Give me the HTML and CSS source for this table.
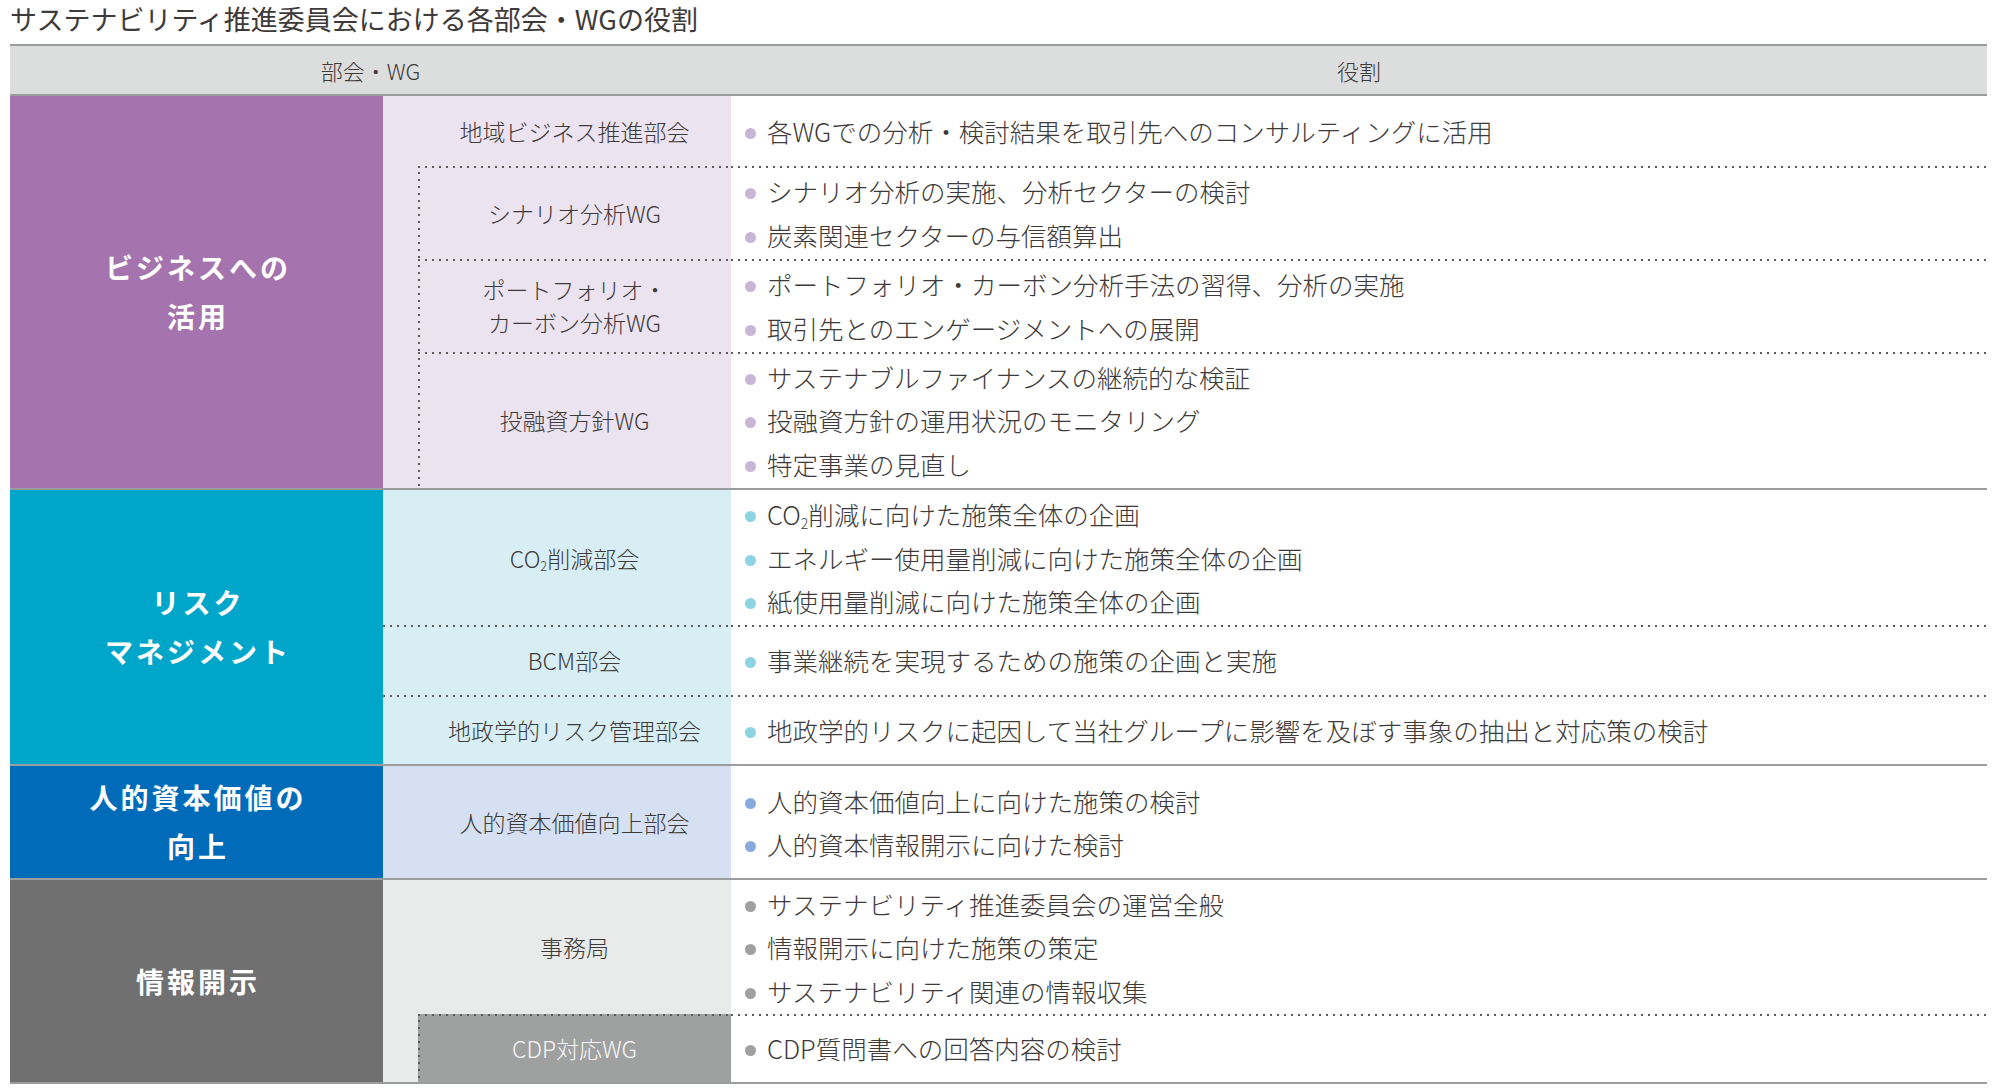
FILE: index.html
```html
<!DOCTYPE html>
<html lang="ja">

<head>
  <meta charset="UTF-8" />
  <meta name="viewport" content="width=device-width, initial-scale=1.0" />
  <title>サステナビリティ推進委員会における各部会・WGの役割</title>
  <link rel="stylesheet" href="styles.css">
</head>

<body>
  <h1 class="title">サステナビリティ推進委員会における各部会・WGの役割</h1>

  <div class="chart">
    <div class="head head-unit">部会・WG</div>
    <div class="head">役割</div>

    <!-- ビジネスへの活用 -->
    <div class="sec sec-biz rows-4">ビジネスへの<br>活用</div>
    <div class="unit wide biz"><span>地域ビジネス推進部会</span></div>
    <div class="role biz"><p>各WGでの分析・検討結果を取引先へのコンサルティングに活用</p></div>

    <div class="strip biz rows-3"></div>
    <div class="unit wg biz dot-top"><span>シナリオ分析WG</span></div>
    <div class="role biz dot-top">
      <p>シナリオ分析の実施、分析セクターの検討</p>
      <p>炭素関連セクターの与信額算出</p>
    </div>

    <div class="unit wg biz dot-top two-line"><span>ポートフォリオ・<br>カーボン分析WG</span></div>
    <div class="role biz dot-top">
      <p>ポートフォリオ・カーボン分析手法の習得、分析の実施</p>
      <p>取引先とのエンゲージメントへの展開</p>
    </div>

    <div class="unit wg biz dot-top"><span>投融資方針WG</span></div>
    <div class="role biz dot-top">
      <p>サステナブルファイナンスの継続的な検証</p>
      <p>投融資方針の運用状況のモニタリング</p>
      <p>特定事業の見直し</p>
    </div>

    <!-- リスクマネジメント -->
    <div class="sec sec-risk rows-3 first">リスク<br>マネジメント</div>
    <div class="unit wide risk first"><span>CO<sub>2</sub>削減部会</span></div>
    <div class="role risk first">
      <p>CO<sub>2</sub>削減に向けた施策全体の企画</p>
      <p>エネルギー使用量削減に向けた施策全体の企画</p>
      <p>紙使用量削減に向けた施策全体の企画</p>
    </div>

    <div class="unit wide risk dot-top"><span>BCM部会</span></div>
    <div class="role risk dot-top"><p>事業継続を実現するための施策の企画と実施</p></div>

    <div class="unit wide risk dot-top"><span>地政学的リスク管理部会</span></div>
    <div class="role risk dot-top"><p>地政学的リスクに起因して当社グループに影響を及ぼす事象の抽出と対応策の検討</p></div>

    <!-- 人的資本価値の向上 -->
    <div class="sec sec-hr first">人的資本価値の<br>向上</div>
    <div class="unit wide hr first"><span>人的資本価値向上部会</span></div>
    <div class="role hr first">
      <p>人的資本価値向上に向けた施策の検討</p>
      <p>人的資本情報開示に向けた検討</p>
    </div>

    <!-- 情報開示 -->
    <div class="sec sec-info rows-2 first last">情報開示</div>
    <div class="unit wide info first"><span>事務局</span></div>
    <div class="role info first">
      <p>サステナビリティ推進委員会の運営全般</p>
      <p>情報開示に向けた施策の策定</p>
      <p>サステナビリティ関連の情報収集</p>
    </div>

    <div class="strip info last"></div>
    <div class="unit wg cdp dot-top last"><span>CDP対応WG</span></div>
    <div class="role info dot-top last"><p>CDP質問書への回答内容の検討</p></div>
  </div>
</body>

</html>
```

FILE: styles.css
```css
body {
  margin: 0;
  color: #3e3a39;
  font-family: "Noto Sans CJK JP", "Noto Sans", sans-serif;
  font-weight: 300;
  background: #fff;
}

.title {
  margin: 0;
  padding-left: 10px;
  font-size: 27px;
  font-weight: 400;
  line-height: 38px;
  white-space: nowrap;
}

.chart {
  display: grid;
  grid-template-columns: 373px 35px 313px 1fr;
  grid-template-rows: 52px 70px 93px 93px 136px 137px 70px 69px 114px 136px 70px;
  width: 1977px;
  margin: 6px 0 0 10px;
}

.chart > div {
  box-sizing: border-box;
}

.head {
  display: flex;
  align-items: center;
  justify-content: center;
  background: #dcdddd;
  border-top: 2px solid #9a9c9d;
  border-bottom: 2px solid #9a9c9d;
  font-size: 22px;
}

.head-unit {
  grid-column: span 3;
}

.rows-2 { grid-row: span 2; }
.rows-3 { grid-row: span 3; }
.rows-4 { grid-row: span 4; }

.first {
  border-top: 2px solid #9a9c9d;
}

.last {
  border-bottom: 2px solid #9a9c9d;
}

/* section labels */
.sec {
  display: flex;
  align-items: center;
  justify-content: center;
  padding-left: 3px;
  color: #fff;
  font-size: 28px;
  font-weight: 700;
  letter-spacing: 3px;
  line-height: 49px;
  text-align: center;
}

.sec-biz { background: #a573ad; }
.sec-risk { background: #00a6ca; }
.sec-hr { background: #006cb9; }
.sec-info { background: #717071; }

/* unit column */
.unit {
  display: flex;
  align-items: center;
  justify-content: center;
  font-size: 23px;
  text-align: center;
  white-space: nowrap;
}

.unit.wide {
  grid-column: span 2;
  padding-left: 35px;
}

.two-line {
  line-height: 33px;
}

.unit.biz, .strip.biz { background-color: #ebe3f0; }
.unit.risk { background-color: #d7eef4; }
.unit.hr { background-color: #d5e1f2; }
.unit.info, .strip.info { background-color: #e9eaea; }

.unit.cdp {
  background-color: #9fa0a0;
  color: #f7f7f7;
}

sub {
  font-size: 0.55em;
  vertical-align: -0.25em;
  line-height: 0;
}

/* dotted rules */
.dot-top {
  background-image: linear-gradient(to right, #5c5c5c 2px, transparent 2px);
  background-size: 7px 2px;
  background-repeat: repeat-x;
  background-position: left top;
}

.unit.wg {
  background-image:
    linear-gradient(to right, #5c5c5c 2px, transparent 2px),
    linear-gradient(to bottom, #5c5c5c 2px, transparent 2px);
  background-size: 7px 2px, 2px 7px;
  background-repeat: repeat-x, repeat-y;
  background-position: left top, left 6px;
}

/* role column */
.role {
  display: flex;
  flex-direction: column;
  justify-content: center;
  padding-left: 14px;
  font-size: 25.5px;
  white-space: nowrap;
}

.role p {
  margin: 0;
  line-height: 43.4px;
}

.role p::before {
  content: "";
  display: inline-block;
  width: 11px;
  height: 11px;
  margin-right: 11px;
  border-radius: 50%;
  vertical-align: 3px;
  background: #9fa0a0;
}

.role.biz p::before { background: #cbb5d7; }
.role.risk p::before { background: #8dd3e4; }
.role.hr p::before { background: #88abde; }
.role.info p::before { background: #9fa0a0; }
```
